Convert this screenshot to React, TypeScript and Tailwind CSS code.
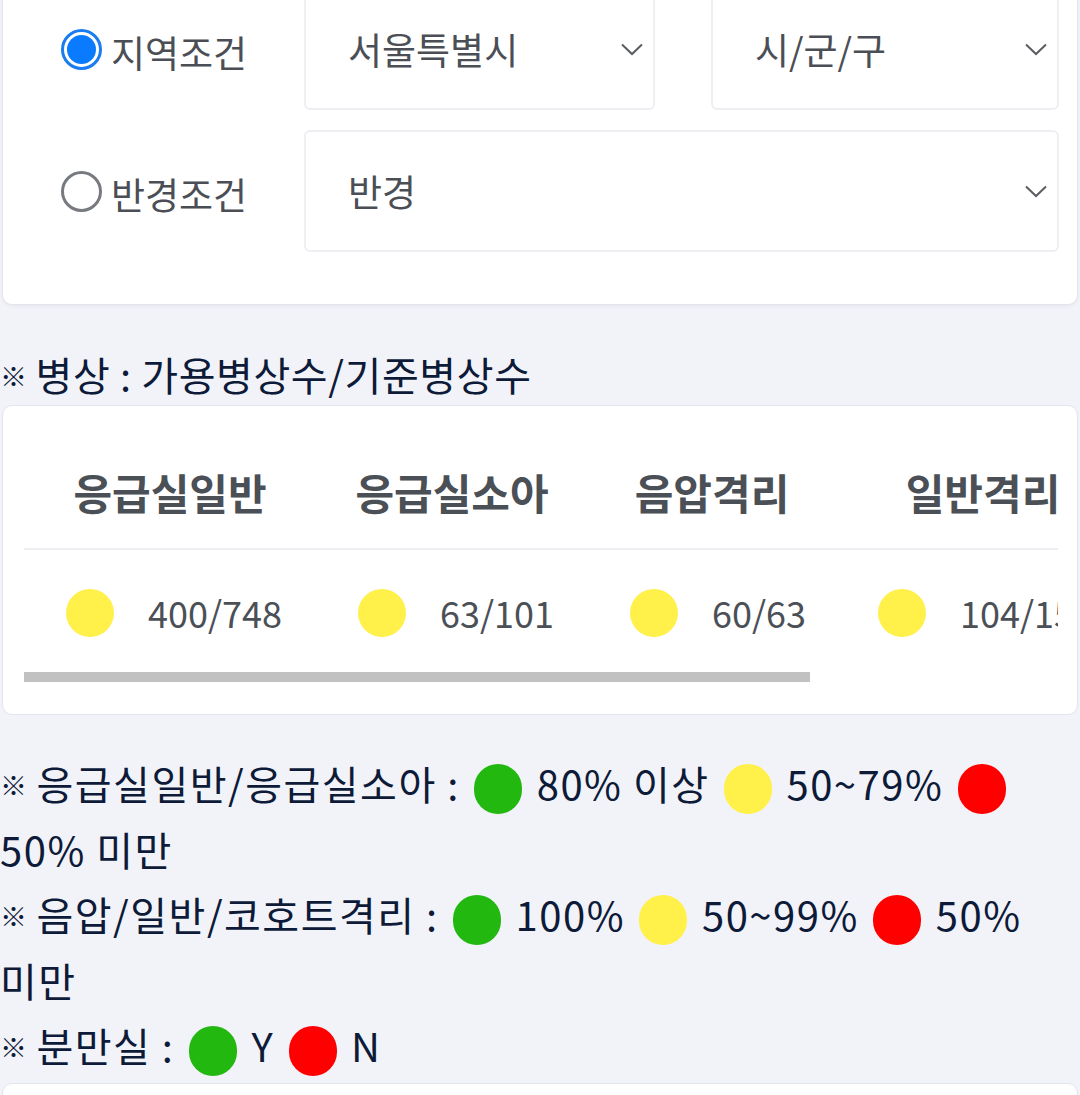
import React from "react";

const font = { fontFamily: '"Noto Sans CJK KR", "Noto Sans", sans-serif' };

const Chevron = () => (
  <svg width="22" height="13" viewBox="0 0 22 13" fill="none" className="shrink-0">
    <path d="M1 1.5 L11 11 L21 1.5" stroke="#5a5d62" strokeWidth="2" />
  </svg>
);

const Select = ({ label, className = "" }: { label: string; className?: string }) => (
  <div
    className={
      "flex h-[122px] items-center justify-between rounded-[6px] border-2 border-[#eeeff3] bg-white pl-[42px] pr-[10px] " +
      className
    }
  >
    <span className="text-[37px] leading-[50px] text-[#4b4f55]">{label}</span>
    <Chevron />
  </div>
);

const Radio = ({ checked, label }: { checked?: boolean; label: string }) => (
  <div className="flex w-[243px] shrink-0 items-center pl-[58px]">
    {checked ? (
      <span className="flex h-[41px] w-[41px] shrink-0 items-center justify-center rounded-full border-[3px] border-[#1a7cf0] bg-white">
        <span className="h-[29px] w-[29px] rounded-full bg-[#0a7bff]" />
      </span>
    ) : (
      <span className="h-[41px] w-[41px] shrink-0 rounded-full border-[3px] border-[#777a7e] bg-white" />
    )}
    <span className="ml-[9px] mt-[6px] whitespace-nowrap text-[37px] leading-[50px] text-[#4b4f55]">{label}</span>
  </div>
);

const Dot = ({ color, className = "" }: { color: string; className?: string }) => (
  <span className={"inline-block h-[50px] w-[48px] rounded-full align-middle " + color + " " + className} />
);

const Mark = () => <span className="mr-[8px] inline-block align-[4px] text-[27px] font-bold">※</span>;

const columns = [
  { name: "응급실일반", value: "400/748", w: "w-[292px]" },
  { name: "응급실소아", value: "63/101", w: "w-[272px]" },
  { name: "음압격리", value: "60/63", w: "w-[248px]" },
  { name: "일반격리", value: "104/150", w: "w-[294px]" },
  { name: "코호트격리", value: "12/20", w: "w-[265px]" },
];

export default function App() {
  return (
    <div className="h-[1095px] overflow-hidden bg-[#f2f3f9] text-[#0d1a38]" style={font}>
      {/* 검색 조건 카드 */}
      <div className="mx-[2px] -mt-[40px] rounded-[10px] border border-[#e3e4ec] bg-white pb-[52px] pr-[18px] pt-[27px] shadow-[0_2px_3px_rgba(0,0,0,0.04)]">
        <div className="flex items-center">
          <Radio checked label="지역조건" />
          <div className="ml-[58px] flex flex-1 gap-[56px]">
            <Select label="서울특별시" className="w-[351px]" />
            <Select label="시/군/구" className="flex-1" />
          </div>
        </div>
        <div className="mt-[20px] flex items-center">
          <Radio label="반경조건" />
          <div className="ml-[58px] flex-1">
            <Select label="반경" />
          </div>
        </div>
      </div>

      <div className="mt-[41px] text-[40px] leading-[56px] tracking-[0.6px]">
        <Mark />병상 : 가용병상수/기준병상수
      </div>

      {/* 병상 테이블 */}
      <div className="mx-[2px] mt-[1px] h-[310px] rounded-[10px] border border-[#e3e4ec] bg-white pl-[21px] pr-[19px] pt-[55px]">
        <div className="overflow-hidden">
          <div className="flex w-max">
            {columns.map((c) => (
              <div key={c.name} className={c.w}>
                <div className="h-[89px] whitespace-nowrap border-b-2 border-[#eeeff2] text-center text-[42px] font-bold leading-[62px] text-[#4b5056]">
                  {c.name}
                </div>
                <div className="flex h-[130px] items-start pl-[42px] pt-[39px]">
                  <span className="h-[48px] w-[48px] shrink-0 rounded-full bg-[#fff04a]" />
                  <span className="ml-[34px] -mt-[2px] whitespace-nowrap text-[36px] leading-[50px] text-[#4b5056]">{c.value}</span>
                </div>
              </div>
            ))}
          </div>
        </div>
        <div className="-mt-[8px] h-[10px] w-[786px] bg-[#c1c1c1]" />
      </div>

      {/* 범례 */}
      <div className="mt-[36px] break-keep text-[40px] leading-[65px] tracking-[1.5px]">
        <div>
          <Mark />응급실일반/응급실소아 :{" "}
          <Dot color="bg-[#22b80f]" className="mx-[4px]" /> 80% 이상{" "}
          <Dot color="bg-[#fff04a]" className="mx-[4px]" /> 50~79%{" "}
          <Dot color="bg-[#ff0000]" className="mx-[4px]" /> 50% 미만
        </div>
        <div>
          <Mark />음압/일반/코호트격리 :{" "}
          <Dot color="bg-[#22b80f]" className="mx-[4px]" /> 100%{" "}
          <Dot color="bg-[#fff04a]" className="mx-[4px]" /> 50~99%{" "}
          <Dot color="bg-[#ff0000]" className="mx-[4px]" /> 50% 미만
        </div>
        <div>
          <Mark />분만실 :{" "}
          <Dot color="bg-[#22b80f]" className="mx-[4px]" /> Y{" "}
          <Dot color="bg-[#ff0000]" className="mx-[4px]" /> N
        </div>
      </div>

      <div className="mx-[2px] mt-[4px] h-[80px] rounded-t-[10px] border border-[#e3e4ec] bg-white" />
    </div>
  );
}
